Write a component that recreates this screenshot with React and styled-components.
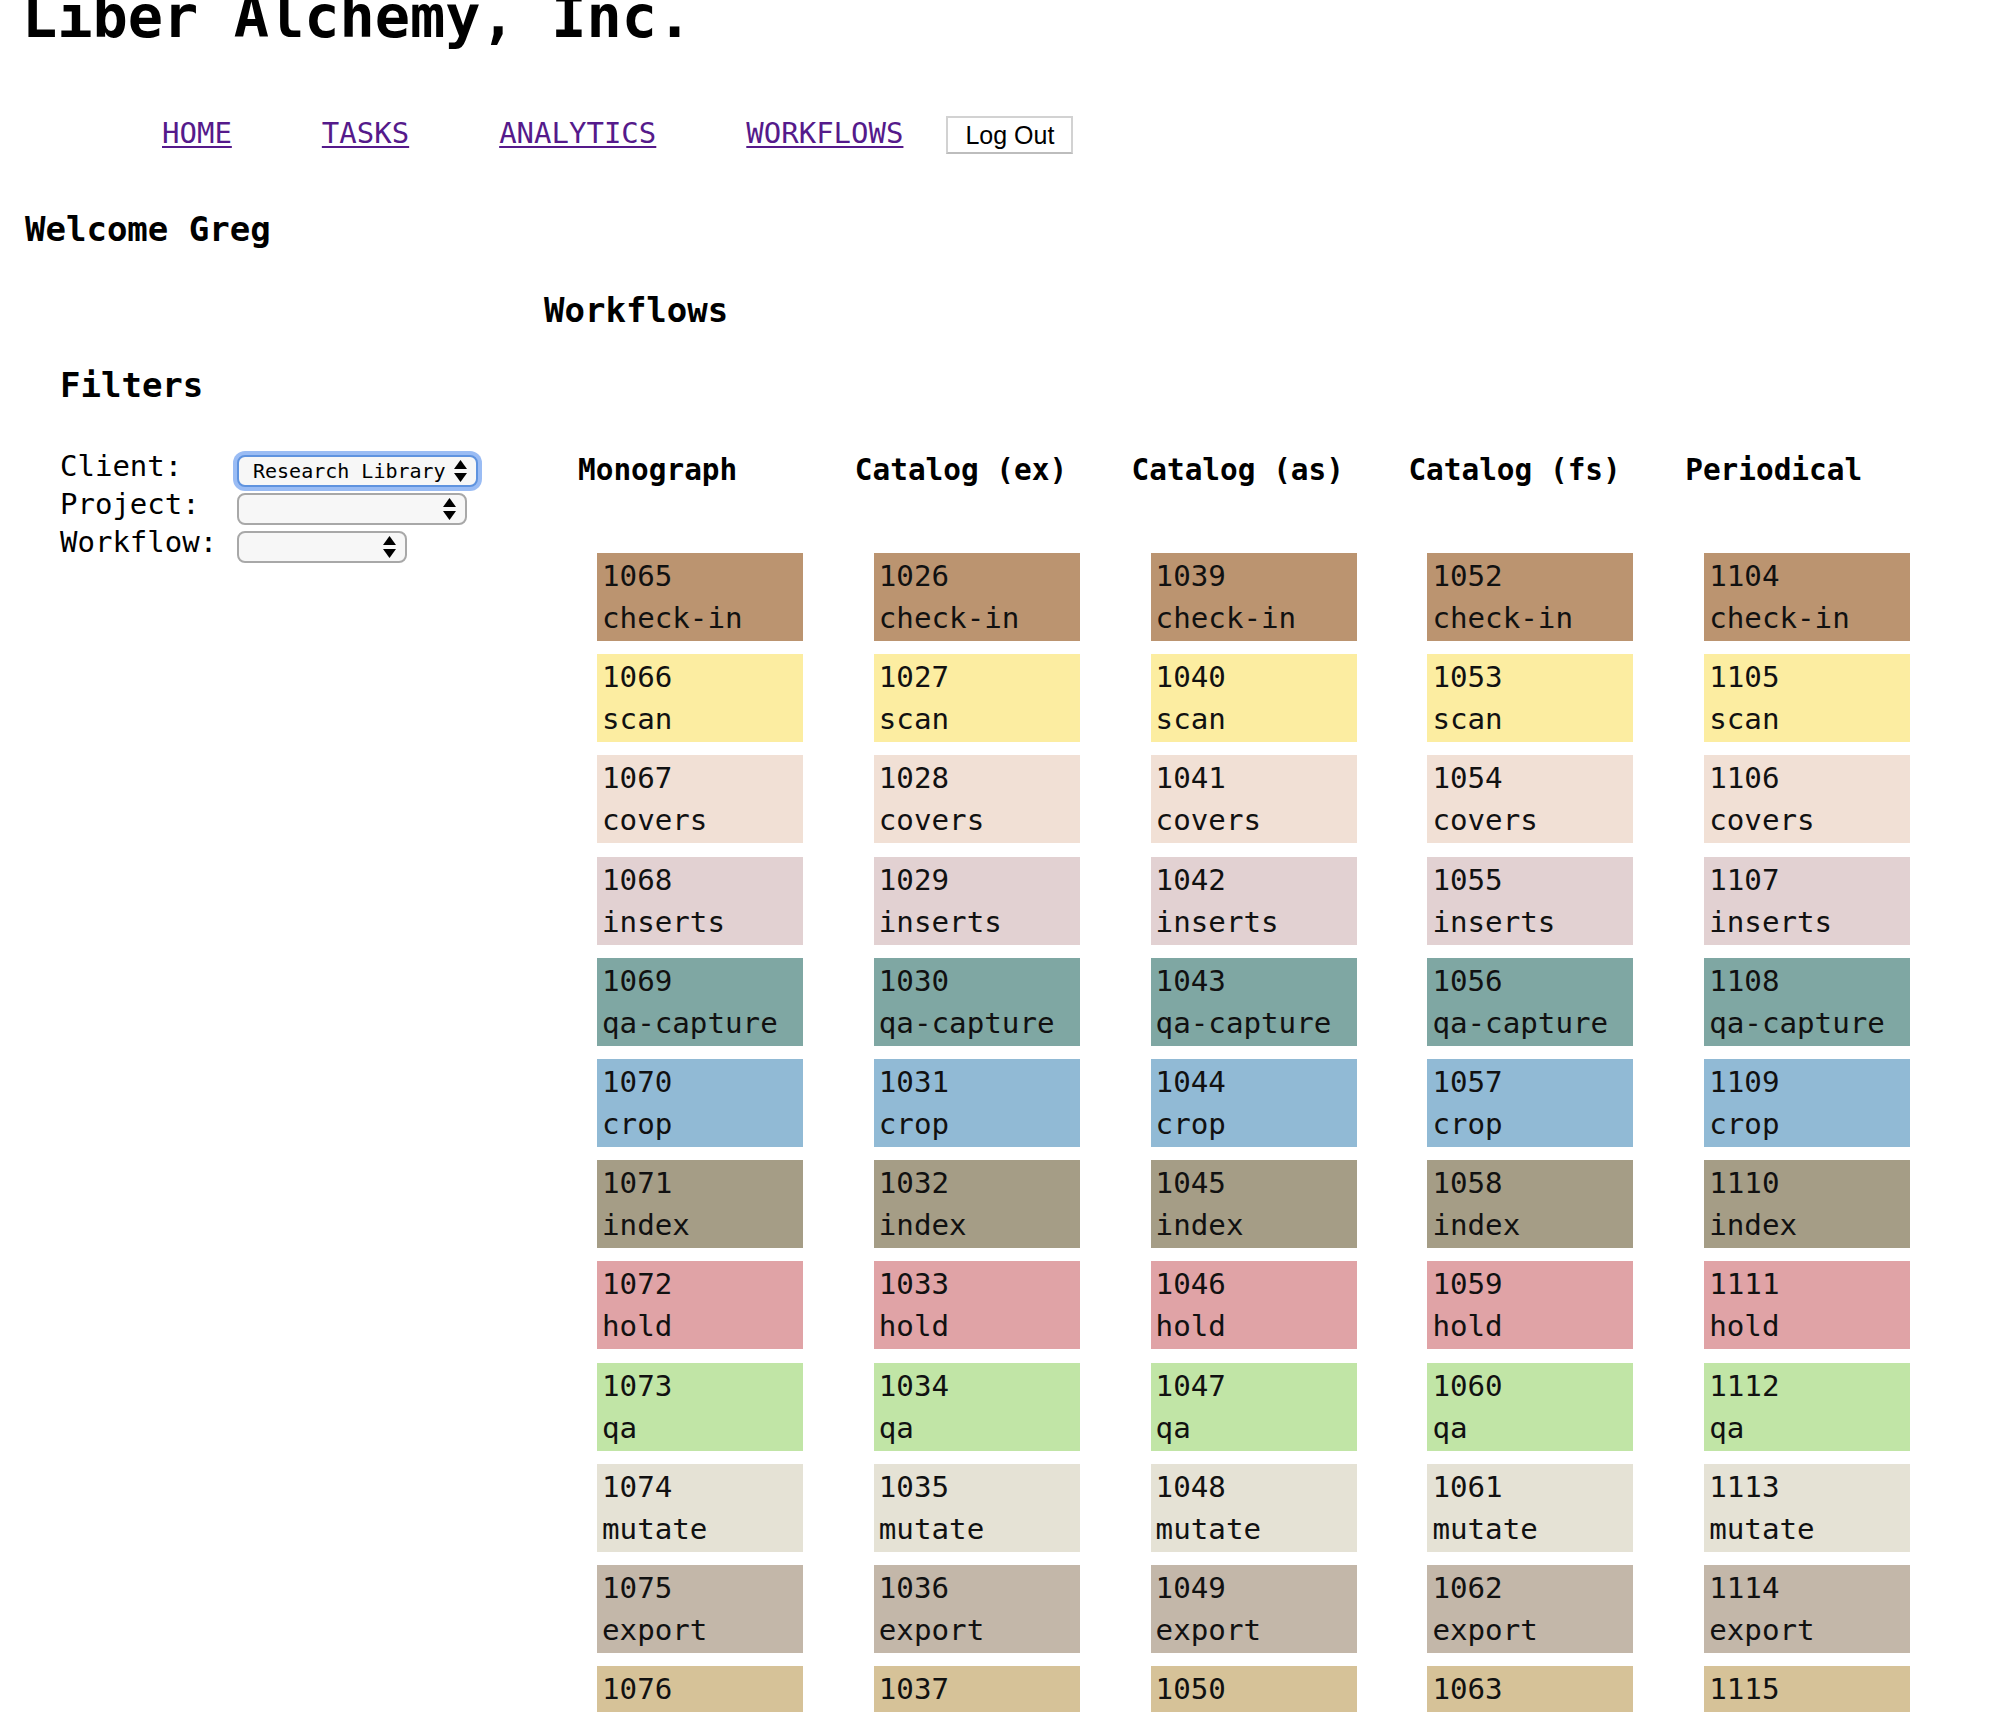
import React from "react";
import styled, { createGlobalStyle } from "styled-components";

const GlobalStyle = createGlobalStyle`
  body {
    margin: 0;
    background: #ffffff;
    color: #000000;
    font-family: "DejaVu Sans Mono", monospace;
  }
`;

const Page = styled.div`
  display: flow-root;
  min-height: 1712px;
`;

const Title = styled.h1`
  margin: -17px 0 0 22px;
  font-size: 58.6px;
  line-height: 68px;
  font-weight: 700;
`;

const Nav = styled.nav`
  display: flex;
  align-items: center;
  gap: 90px;
  height: 38px;
  margin-top: 65px;
  padding-left: 162px;
`;

const NavLink = styled.a`
  font-size: 29px;
  line-height: 34px;
  margin-bottom: 4px;
  color: #551a8b;
  text-decoration: underline;
  text-decoration-thickness: 2px;
  text-underline-offset: 3px;
`;

const LogOutButton = styled.button`
  box-sizing: border-box;
  height: 38px;
  margin-left: -47px;
  padding: 0 17px;
  background: #ffffff;
  border: 2px solid #d2d2d2;
  border-bottom-color: #bdbdbd;
  border-radius: 0;
  font-family: "Liberation Sans", Arial, sans-serif;
  font-size: 25px;
  color: #000000;
`;

const Welcome = styled.h2`
  margin: 55px 0 0 25px;
  font-size: 34px;
  line-height: 40px;
  font-weight: 700;
`;

const SectionTitle = styled.h2`
  margin: 41px 0 0 544px;
  font-size: 34px;
  line-height: 40px;
  font-weight: 700;
`;

const Main = styled.div`
  display: flex;
  align-items: flex-start;
  margin-top: 35px;
`;

const Sidebar = styled.aside`
  box-sizing: border-box;
  flex: 0 0 578px;
  padding-left: 60px;
`;

const FiltersTitle = styled.h3`
  margin: 0;
  font-size: 34px;
  line-height: 40px;
  font-weight: 700;
`;

const FilterGrid = styled.div`
  display: grid;
  grid-template-columns: 177px auto;
  grid-auto-rows: 38px;
  margin-top: 42px;
  justify-items: start;
`;

const Label = styled.label`
  font-size: 29px;
  line-height: 38px;
`;

const SelectWrap = styled.div`
  position: relative;
  margin-top: 8px;
  width: ${({ $width }) => $width}px;
  height: 32px;
`;

const Select = styled.select`
  appearance: none;
  box-sizing: border-box;
  width: 100%;
  height: 100%;
  padding: 0 30px 0 14px;
  background: #f7f7f7;
  border: 2px solid ${({ $focused }) => ($focused ? "#5f93df" : "#a8a8a8")};
  border-radius: 8px;
  box-shadow: ${({ $focused }) =>
    $focused ? "0 0 0 4px rgba(120, 165, 240, 0.75)" : "none"};
  font-family: "DejaVu Sans Mono", monospace;
  font-size: 20px;
  color: #000000;
  outline: none;
`;

const Arrows = styled.svg`
  position: absolute;
  right: 11px;
  top: 5px;
  pointer-events: none;
`;

const Board = styled.section`
  display: grid;
  grid-template-columns: repeat(5, 276.8px);
  padding-top: 87px;
`;

const Column = styled.div`
  display: flex;
  flex-direction: column;
`;

const ColumnTitle = styled.h3`
  margin: 0 0 65px 0;
  font-size: 29.4px;
  line-height: 36px;
  font-weight: 700;
  white-space: nowrap;
`;

const Cards = styled.div`
  display: flex;
  flex-direction: column;
  gap: 13.2px;
  padding-left: 19px;
`;

const Card = styled.div`
  box-sizing: border-box;
  width: 206px;
  height: 88px;
  padding: 2px 5px;
  background: ${({ $color }) => $color};
  color: #111111;
  font-size: 29.2px;
  line-height: 42px;
  white-space: nowrap;
`;

const statuses = [
  { name: "check-in", color: "#bb9470" },
  { name: "scan", color: "#fceda1" },
  { name: "covers", color: "#f1e0d5" },
  { name: "inserts", color: "#e2d1d2" },
  { name: "qa-capture", color: "#7fa7a3" },
  { name: "crop", color: "#91bad5" },
  { name: "index", color: "#a59d86" },
  { name: "hold", color: "#e0a3a6" },
  { name: "qa", color: "#c1e5a6" },
  { name: "mutate", color: "#e5e2d5" },
  { name: "export", color: "#c3b7a9" },
  { name: "complete", color: "#d6c298" },
];

const workflows = [
  { name: "Monograph", start: 1065 },
  { name: "Catalog (ex)", start: 1026 },
  { name: "Catalog (as)", start: 1039 },
  { name: "Catalog (fs)", start: 1052 },
  { name: "Periodical", start: 1104 },
];

const SelectArrows = () => (
  <Arrows width="13" height="22" viewBox="0 0 13 22">
    <path d="M6.5 0 L13 9 L0 9 Z" fill="#000" />
    <path d="M0 13 L13 13 L6.5 22 Z" fill="#000" />
  </Arrows>
);

const FilterSelect = ({ width, focused, children }) => (
  <SelectWrap $width={width}>
    <Select $focused={focused} defaultValue="">
      {children}
    </Select>
    <SelectArrows />
  </SelectWrap>
);

const App = () => {
  return (
    <Page>
      <GlobalStyle />
      <Title>Liber Alchemy, Inc.</Title>
      <Nav>
        <NavLink href="#">HOME</NavLink>
        <NavLink href="#">TASKS</NavLink>
        <NavLink href="#">ANALYTICS</NavLink>
        <NavLink href="#">WORKFLOWS</NavLink>
        <LogOutButton>Log Out</LogOutButton>
      </Nav>
      <Welcome>Welcome Greg</Welcome>
      <SectionTitle>Workflows</SectionTitle>
      <Main>
        <Sidebar>
          <FiltersTitle>Filters</FiltersTitle>
          <FilterGrid>
            <Label>Client:</Label>
            <FilterSelect width={241} focused>
              <option value="">Research Library</option>
            </FilterSelect>
            <Label>Project:</Label>
            <FilterSelect width={230}>
              <option value=""></option>
            </FilterSelect>
            <Label>Workflow:</Label>
            <FilterSelect width={170}>
              <option value=""></option>
            </FilterSelect>
          </FilterGrid>
        </Sidebar>
        <Board>
          {workflows.map((wf) => (
            <Column key={wf.name}>
              <ColumnTitle>{wf.name}</ColumnTitle>
              <Cards>
                {statuses.map((s, i) => (
                  <Card key={s.name} $color={s.color}>
                    {wf.start + i}
                    <br />
                    {s.name}
                  </Card>
                ))}
              </Cards>
            </Column>
          ))}
        </Board>
      </Main>
    </Page>
  );
};

export default App;
